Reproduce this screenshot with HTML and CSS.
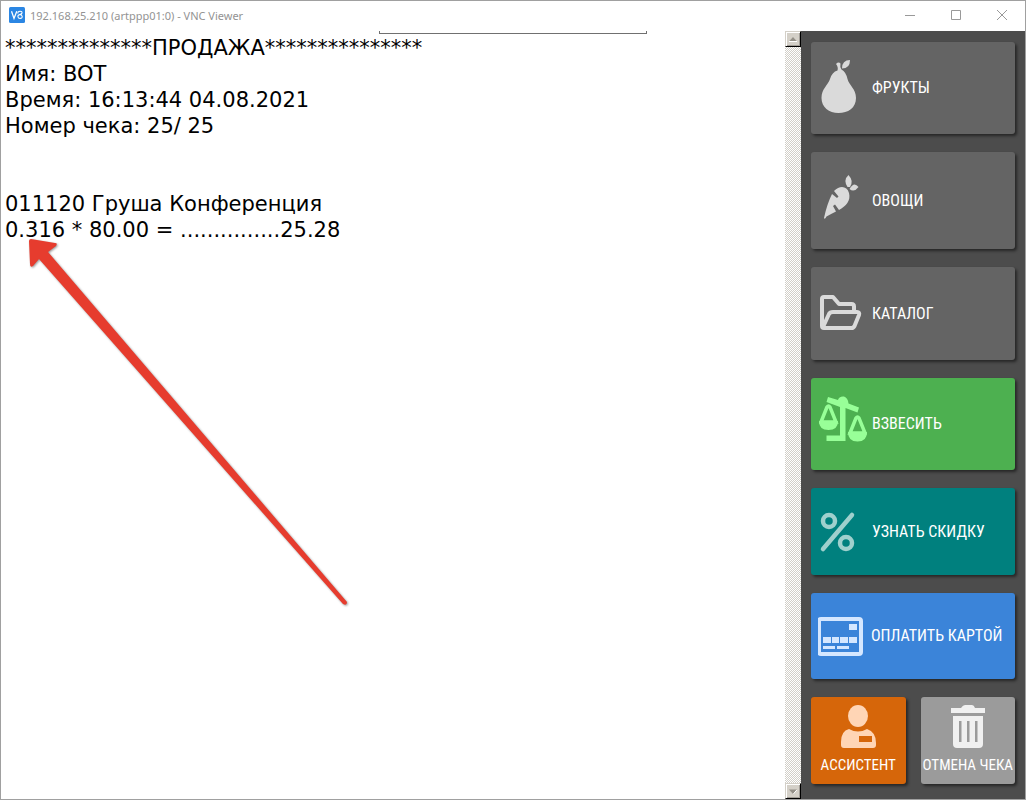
FILE: index.html
```html
<!DOCTYPE html>
<html lang="ru">
<head>
<meta charset="utf-8">
<title>192.168.25.210 (artppp01:0) - VNC Viewer</title>
<link rel="stylesheet" href="styles.css">
</head>
<body>
<div class="window">
  <header class="titlebar">
    <svg class="app-icon" viewBox="0 0 16 16" aria-hidden="true">
      <rect width="16" height="16" rx="1.5" fill="#2b86e3"/>
      <path d="M2.500 4.200 5 11.400 7.800 4.200" fill="none" stroke="#fff" stroke-width="1.3"/>
      <path d="M8.800 6.500Q8.600 4.200 11 4.200Q13.300 4.200 13 6Q12.600 7.400 10.600 7.600Q8.600 8 9 10Q9.300 11.500 11.200 11.400Q13.400 11.200 13.200 9.300Q13 8 11.500 7.700" fill="none" stroke="#fff" stroke-width="1.1"/>
    </svg>
    <h1 class="title">192.168.25.210 (artppp01:0) - VNC Viewer</h1>
    <div class="window-controls">
      <button class="control" type="button" aria-label="Свернуть"><svg viewBox="0 0 12 12"><path d="M1 6.500h10"/></svg></button>
      <button class="control" type="button" aria-label="Развернуть"><svg viewBox="0 0 12 12"><path d="M1.500 1.500h9v9h-9z"/></svg></button>
      <button class="control" type="button" aria-label="Закрыть"><svg viewBox="0 0 12 12"><path d="M1 1l10 10M11 1 1 11"/></svg></button>
    </div>
  </header>
  <div class="screen">
    <main class="receipt">
      <div class="toolbar-tab"></div>
      <p>**************ПРОДАЖА***************</p>
      <p>Имя: BOT</p>
      <p>Время: 16:13:44 04.08.2021</p>
      <p>Номер чека: 25/ 25</p>
      <p class="item">011120 Груша Конференция</p>
      <p>0.316 * 80.00 = ...............25.28</p>
      <svg class="arrow" viewBox="0 0 330 380" aria-hidden="true">
        <path d="M11 8Q9 8 9 10L10 33Q10 37 13 35L19 28 323 373Q327 375 327 371L28 21 36 15Q38 12 35 12Z"/>
      </svg>
    </main>
    <div class="scrollbar">
      <button class="scroll-button" type="button" aria-label="Вверх"><svg viewBox="0 0 8 5"><path d="M0 4.500 4 0l4 4.500z" fill="#949088"/><path d="M0 4.500h8" stroke="#fff"/></svg></button>
      <button class="scroll-button" type="button" aria-label="Вниз"><svg viewBox="0 0 8 5"><path d="M0 .5h8L4 5z" fill="#949088"/><path d="M4.500 4.800 8 .8" stroke="#fff"/></svg></button>
    </div>
    <nav class="actions">
      <button class="action" type="button">
        <svg class="icon" viewBox="-1 3 48 60"><g fill="#dadada"><path d="M17.500 15.500Q18.500 12 16 9Q18.500 6.500 20.500 8.500Q19.700 12 21.500 14.500Q26 17 27.500 24C29 30 36 34 36 43C36 53 28 58 18.500 58C9 58 1.500 52 1.500 43C1.500 34 8 30 10 24Q12 17 17.500 15.500Z"/><path d="M22 13.500Q22 5 30 5Q30 13.500 22 13.500Z"/></g></svg>
        <span>ФРУКТЫ</span>
      </button>
      <button class="action" type="button">
        <svg class="icon" viewBox="-1 4 48 60"><g fill="#dadada"><path d="M4 51Q7 37 12 27L17 31 18.500 29.500 14 24C20 18 27 19 29 26C31 34 26 39 19 43L15 37.500 13 39 16 44.500Q11 47 6.500 49.500Q4.500 53 4 51Z"/><path d="M27.500 20Q23 13 28.500 8Q34 14 30 20Z"/><path d="M29.500 22Q34 14 38.500 20Q34 26 29.500 22Z"/></g></svg>
        <span>ОВОЩИ</span>
      </button>
      <button class="action" type="button">
        <svg class="icon" viewBox="0 6 48 60"><g fill="none" stroke="#dadada" stroke-width="4" stroke-linejoin="round"><path d="M35 33V28.500Q35 26 32.500 26H20L14 19H5Q3 19 3 21V48Q3 50 5 50H32.500Q34.500 50 35.500 48L40 37Q41 34 38 34H14Q11 34 10 36L4 49"/></g></svg>
        <span>КАТАЛОГ</span>
      </button>
      <button class="action green" type="button">
        <svg class="icon" viewBox="0 6 48 60"><path fill="#98ff98" d="M9 9 19 12Q20 8 25 8.500Q29 10 29.500 15.500L40 19.500 38.500 24.500 26.500 20V53H7.500V47.500H21V19L7.500 14Z"/><g fill="none" stroke="#98ff98" stroke-width="3.500"><path d="M8 19 2 34H17L11 19Q9.500 17 8 19Z"/><path d="M37 30 31 45H46L40 30Q38.500 28 37 30Z"/></g><path fill="#98ff98" d="M0 33H19Q19 42 9.500 42 0 42 0 33ZM29 44H48Q48 53.500 38.500 53.500 29 53.500 29 44Z"/></svg>
        <span>ВЗВЕСИТЬ</span>
      </button>
      <button class="action teal" type="button">
        <svg class="icon" viewBox="-1 1 48 60"><g fill="none" stroke="#9fd0cd" stroke-width="4.500"><circle cx="9" cy="20" r="6"/><circle cx="26" cy="42" r="6"/><path d="M32 14 3 48" stroke-linecap="round"/></g></svg>
        <span>УЗНАТЬ СКИДКУ</span>
      </button>
      <button class="action blue" type="button">
        <svg class="icon" viewBox="1 0 48 60"><rect x="2" y="13" width="42" height="35" rx="2" fill="none" stroke="#d5e7ff" stroke-width="4"/><path fill="#d5e7ff" d="M32 18h8v6h-8zM6 31h8v6H6zM15 31h7v6h-7zM23 31h8v6h-8zM32 31h8v6h-8zM6 40h12v3H6zM20 40h12v3H20z"/></svg>
        <span>ОПЛАТИТЬ КАРТОЙ</span>
      </button>
      <div class="action-pair">
        <button class="action tile orange" type="button">
          <svg class="tile-icon" viewBox="0 0 48 44"><g fill="#ffd5b5"><ellipse cx="24" cy="11" rx="10" ry="11"/><path fill-rule="evenodd" d="M15 24Q24 29 33 24Q42 27 42 38V40Q42 43 39 43H10Q7 43 7 40V37Q7 26 15 24ZM25 31V37H38V31Z"/></g></svg>
          <span>АССИСТЕНТ</span>
        </button>
        <button class="action tile gray" type="button">
          <svg class="tile-icon" viewBox="0 0 48 44"><path fill="#f0f0f0" fill-rule="evenodd" d="M7 3H17Q19 0 21 0H28Q30 0 31 3H41V8H7ZM9 11H39V39Q39 43 35 43H13Q9 43 9 39ZM15 16V37H17.500V16ZM23 16V37H25.500V16ZM31 16V37H33.500V16Z"/></svg>
          <span>ОТМЕНА ЧЕКА</span>
        </button>
      </div>
    </nav>
  </div>
</div>
</body>
</html>
```
FILE: styles.css
```css
* {
  box-sizing: border-box;
}

body {
  margin: 0;
  background: #fff;
}

button {
  padding: 0;
  border: 0;
  font: inherit;
}

.window {
  display: flex;
  flex-direction: column;
  min-height: 100vh;
  border: 1px solid #a0a0a0;
}

.titlebar {
  display: flex;
  align-items: center;
  height: 30px;
  padding-left: 8px;
  gap: 5px;
}

.app-icon {
  width: 16px;
  height: 16px;
  margin-bottom: 2px;
}

.title {
  flex: 1;
  margin: 0;
  color: #939393;
  font: 400 11px/16px "Noto Sans", sans-serif;
}

.window-controls {
  display: flex;
  margin-bottom: 2px;
}

.control {
  display: grid;
  place-items: center;
  width: 46px;
  height: 28px;
  background: none;
}

.control svg {
  width: 12px;
  height: 12px;
  fill: none;
  stroke: #999;
}

.screen {
  display: flex;
  flex: 1;
}

.receipt {
  position: relative;
  flex: 1;
  padding: 4px 4px 0;
  color: #000;
  font: 21px/26px "DejaVu Sans", sans-serif;
}

.receipt p {
  margin: 0;
  white-space: nowrap;
}

.receipt .item {
  margin-top: 52px;
}

.toolbar-tab {
  position: absolute;
  top: 0;
  left: 378px;
  width: 268px;
  height: 3px;
  border: 1px solid #707070;
  border-top: 0;
}

.arrow {
  position: absolute;
  top: 200px;
  left: 19px;
  width: 330px;
  height: 380px;
  fill: #e63c2e;
  filter: drop-shadow(1px 1px 1px rgba(0, 0, 0, 0.4));
}

.scrollbar {
  display: flex;
  flex-direction: column;
  justify-content: space-between;
  width: 16px;
  background: repeating-conic-gradient(#d2cfc8 0 25%, #fff 0 50%) 0 0 / 2px 2px;
}

.scroll-button {
  display: grid;
  place-items: center;
  width: 16px;
  height: 16px;
  border: 1px solid;
  border-color: #d4d0c8 #000 #000 #d4d0c8;
  background: #d4d0c8;
  box-shadow: inset 1px 1px #fff, inset -1px -1px #a39f98;
}

.scroll-button svg {
  width: 8px;
  height: 5px;
}

.actions {
  display: grid;
  grid-template-columns: minmax(0, 1fr);
  grid-template-rows: 92fr 97fr 93fr 92fr 87fr 86fr 87fr;
  gap: 18px;
  width: 224px;
  padding: 11px 10px 15px;
  background: #4c4c4c;
}

.action {
  display: flex;
  align-items: center;
  gap: 5px;
  padding-left: 8px;
  border-radius: 3px;
  background: #646464;
  box-shadow: 2px 2px 3px rgba(0, 0, 0, 0.5);
  color: #fff;
  font: 400 16px/24px "Roboto Condensed", "Liberation Sans Narrow", "Liberation Sans", sans-serif;
  white-space: nowrap;
}

.icon {
  flex: none;
  width: 48px;
  height: 60px;
}

.green {
  background: #4db050;
}

.teal {
  background: #00807e;
}

.blue {
  padding-left: 7px;
  background: #3b84d9;
}

.action-pair {
  display: grid;
  grid-template-columns: repeat(2, minmax(0, 1fr));
  gap: 15px;
}

.tile {
  flex-direction: column;
  justify-content: center;
  gap: 4px;
  padding: 0;
  font-size: 15px;
}

.tile-icon {
  width: 48px;
  height: 44px;
}

.orange {
  background: #d6660a;
}

.gray {
  background: #9b9b9b;
}
```
